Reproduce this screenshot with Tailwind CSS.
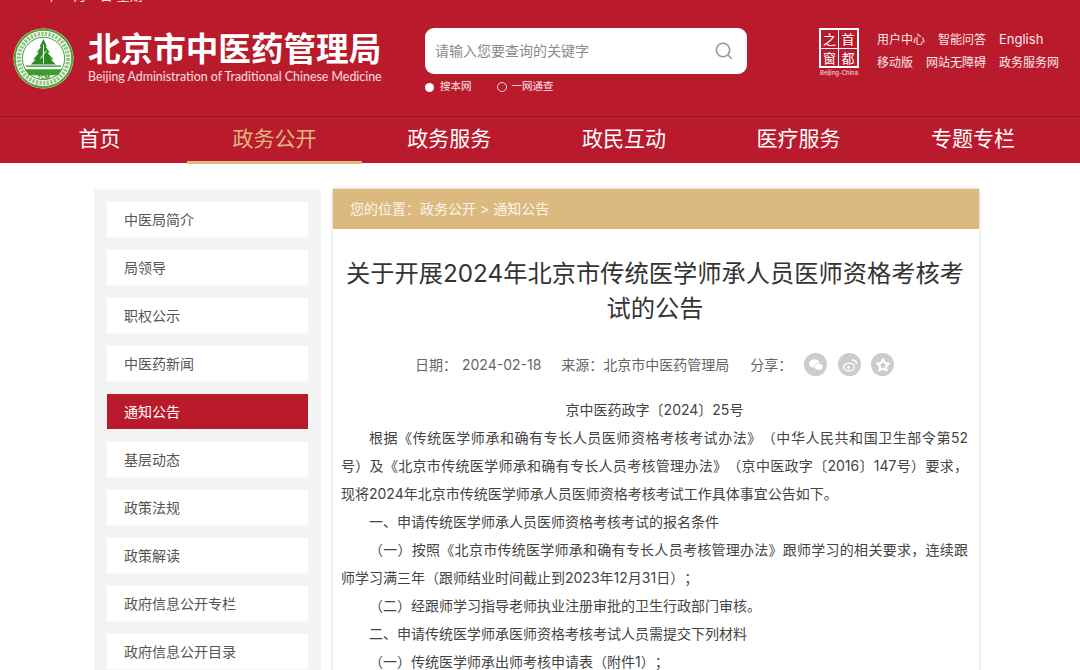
<!DOCTYPE html>
<html lang="zh-CN">
  <head>
    <meta charset="UTF-8" />
    <title>北京市中医药管理局</title>
    <script src="https://cdn.jsdelivr.net/npm/@tailwindcss/browser@4"></script>
  </head>
  <body class="h-[670px] overflow-hidden bg-white font-['Inter','Noto_Sans_CJK_SC',sans-serif] text-[#555]">
    <header class="bg-[#b91b2d] text-white">
      <div class="relative flex h-[117px] border-b border-[#9c1526]">
        <p class="absolute left-[12px] top-[-13px] text-[13px] leading-[16px] text-white/90">2024年02月19日 星期一</p>
        <!-- 徽标 -->
        <div class="ml-[13px] mt-[28px] h-[61px] w-[61px] shrink-0">
          <svg viewBox="0 0 62 62" class="h-full w-full">
            <circle cx="31" cy="31" r="30.5" fill="#fff" />
            <circle cx="31" cy="31" r="29.2" fill="none" stroke="#4ba52f" stroke-width="2" />
            <circle cx="31" cy="31" r="25" fill="none" stroke="#5aa844" stroke-width="4.5" stroke-dasharray="2.5 1.2" opacity="0.65" />
            <circle cx="31" cy="31" r="21.5" fill="none" stroke="#3f9c2b" stroke-width="1" />
            <path d="M31 11l3.500 8h-1.500l4.500 6h-2.500l6 7h-2.500l5 5H18l5-5h-2.500l6-7H24l4.500-6H27z" fill="#2e8b24" />
            <path d="M31 17v19M28 31l6-8" stroke="#fff" stroke-width="1" fill="none" />
            <path d="M13 38h36v1.500H13z" fill="#2e8b24" />
            <path d="M12 42h38l-4 6H16z" fill="#3f9c2b" />
            <text x="31" y="52" text-anchor="middle" font-size="5.500" font-weight="700" fill="#2e8b24">TCM</text>
          </svg>
        </div>
        <!-- 站名 -->
        <div class="ml-[14px] mt-[28px] w-[300px] shrink-0">
          <h1 class="text-[32.6px] font-bold leading-[42px] whitespace-nowrap">北京市中医药管理局</h1>
          <p class="mt-[-1px] text-[12.4px] leading-[16px] whitespace-nowrap text-white/85 font-['Lato',sans-serif]">Beijing Administration of Traditional Chinese Medicine</p>
        </div>
        <!-- 搜索 -->
        <div class="ml-[37px] mt-[28px] w-[322px] shrink-0">
          <div class="flex h-[46px] items-center justify-between rounded-[9px] bg-white pl-[10px] pr-[13px]">
            <span class="mt-[-2px] text-[14px] text-[#8b8b8b]">请输入您要查询的关键字</span>
            <svg viewBox="0 0 20 20" class="h-[20px] w-[20px]" fill="none" stroke="#999" stroke-width="1.6">
              <circle cx="9" cy="9" r="6.700" />
              <path d="M14 14l3.800 3.800" />
            </svg>
          </div>
          <div class="mt-[5px] flex items-center text-[10.5px] leading-[16px] text-white/90">
            <span class="h-[9px] w-[9px] rounded-full bg-white"></span>
            <span class="ml-[6px]">搜本网</span>
            <span class="ml-[25px] h-[10px] w-[10px] rounded-full border border-white/80"></span>
            <span class="ml-[5px]">一网通查</span>
          </div>
        </div>
        <!-- 首都之窗 -->
        <div class="ml-[72px] mt-[28px] flex w-[40px] shrink-0 flex-col items-center">
          <div class="grid h-[40px] w-[40px] grid-cols-2 border-2 border-white text-center text-[13px] leading-[18px]">
            <span class="border-b border-r border-white">之</span>
            <span class="border-b border-white">首</span>
            <span class="border-r border-white">窗</span>
            <span>都</span>
          </div>
          <span class="mt-[1px] text-[6px] leading-[7px] whitespace-nowrap text-white/85">Beijing-China</span>
        </div>
        <!-- 链接 -->
        <div class="ml-[18px] mt-[28px] text-[12px] leading-[23px] text-white/90">
          <div class="flex">
            <span class="w-[61px]">用户中心</span><span class="w-[61px]">智能问答</span><span class="text-[13px]">English</span>
          </div>
          <div class="flex">
            <span class="w-[49px]">移动版</span><span class="w-[73px]">网站无障碍</span><span>政务服务网</span>
          </div>
        </div>
      </div>
      <nav class="grid h-[46px] grid-cols-[187px_175px_174.6px_174.6px_174.6px_174.6px] text-center text-[21px] leading-[44px]">
        <a class="pl-[12px]">首页</a>
        <a class="border-b-[3px] border-[#dcb97f] text-[#dcb97f]">政务公开</a>
        <a>政务服务</a>
        <a>政民互动</a>
        <a>医疗服务</a>
        <a>专题专栏</a>
      </nav>
    </header>

    <main class="ml-[94px] mt-[26px] flex w-[885px] items-start gap-[12px]">
      <!-- 侧栏 -->
      <aside class="w-[227px] shrink-0 space-y-[13px] bg-[#f4f4f4] p-[13px] text-[14px]">
        <a class="block h-[35px] bg-white pl-[17px] leading-[35px]">中医局简介</a>
        <a class="block h-[35px] bg-white pl-[17px] leading-[35px]">局领导</a>
        <a class="block h-[35px] bg-white pl-[17px] leading-[35px]">职权公示</a>
        <a class="block h-[35px] bg-white pl-[17px] leading-[35px]">中医药新闻</a>
        <a class="block h-[35px] bg-[#b91b2d] pl-[17px] leading-[35px] text-white">通知公告</a>
        <a class="block h-[35px] bg-white pl-[17px] leading-[35px]">基层动态</a>
        <a class="block h-[35px] bg-white pl-[17px] leading-[35px]">政策法规</a>
        <a class="block h-[35px] bg-white pl-[17px] leading-[35px]">政策解读</a>
        <a class="block h-[35px] bg-white pl-[17px] leading-[35px]">政府信息公开专栏</a>
        <a class="block h-[35px] bg-white pl-[17px] leading-[35px]">政府信息公开目录</a>
      </aside>

      <!-- 正文 -->
      <article class="w-[646px] shrink-0 shadow-[0_0_4px_rgba(0,0,0,0.2)]">
        <div class="h-[40px] bg-[#dcb97f] pl-[17px] text-[14px] leading-[40px] text-white/85">您的位置：政务公开<span class="mx-[4px]">&gt;</span>通知公告</div>
        <h2 class="ml-[8px] mt-[27px] w-[628px] whitespace-nowrap text-center text-[24.25px] leading-[35px] text-[#333]">关于开展2024年北京市传统医学师承人员医师资格考核考<br />试的公告</h2>
        <div class="mt-[27px] flex h-[23px] items-center pl-[82px] text-[14px] text-[#666]">
          <span>日期：<span class="ml-[5px]">2024-02-18</span></span>
          <span class="ml-[20px]">来源：北京市中医药管理局</span>
          <span class="ml-[21px]">分享：</span>
          <span class="ml-[12px] flex h-[23px] w-[23px] items-center justify-center rounded-full bg-[#ccc]">
            <svg viewBox="0 0 16 16" class="h-[16px] w-[16px]" fill="#fff">
              <ellipse cx="6.300" cy="6.500" rx="5.300" ry="4.300" />
              <ellipse cx="10.800" cy="9.800" rx="4.300" ry="3.400" stroke="#ccc" stroke-width="0.700" />
            </svg>
          </span>
          <span class="ml-[11px] flex h-[23px] w-[23px] items-center justify-center rounded-full bg-[#ccc]">
            <svg viewBox="0 0 16 16" class="h-[16px] w-[16px]" fill="none" stroke="#fff" stroke-width="1.400">
              <ellipse cx="7" cy="10" rx="5.400" ry="3.900" />
              <circle cx="6.500" cy="10.300" r="1.500" fill="#fff" stroke="none" />
              <path d="M10 3q4.500-.5 4.500 4" />
            </svg>
          </span>
          <span class="ml-[10px] flex h-[23px] w-[23px] items-center justify-center rounded-full bg-[#ccc]">
            <svg viewBox="0 0 16 16" class="h-[16px] w-[16px]" fill="none" stroke="#fff" stroke-width="2" stroke-linejoin="round">
              <path d="M8 2l1.800 3.900 4.200.5-3.100 2.900.8 4.200L8 11.500l-3.700 2 .8-4.200L2 6.400l4.200-.5z" />
            </svg>
          </span>
        </div>
        <div class="ml-[8px] mt-[20px] w-[627px] text-justify text-[14px] leading-[28px] text-[#444] [text-spacing-trim:space-all]">
          <p class="text-center">京中医药政字〔2024〕25号</p>
          <p class="indent-[28px]">根据《传统医学师承和确有专长人员医师资格考核考试办法》（中华人民共和国卫生部令第52号）及《北京市传统医学师承和确有专长人员考核管理办法》（京中医政字〔2016〕147号）要求，现将2024年北京市传统医学师承人员医师资格考核考试工作具体事宜公告如下。</p>
          <p class="indent-[28px]">一、申请传统医学师承人员医师资格考核考试的报名条件</p>
          <p class="indent-[28px]">（一）按照《北京市传统医学师承和确有专长人员考核管理办法》跟师学习的相关要求，连续跟师学习满三年（跟师结业时间截止到2023年12月31日）；</p>
          <p class="indent-[28px]">（二）经跟师学习指导老师执业注册审批的卫生行政部门审核。</p>
          <p class="indent-[28px]">二、申请传统医学师承医师资格考核考试人员需提交下列材料</p>
          <p class="indent-[28px]">（一）传统医学师承出师考核申请表（附件1）；</p>
        </div>
      </article>
    </main>
  </body>
</html>
